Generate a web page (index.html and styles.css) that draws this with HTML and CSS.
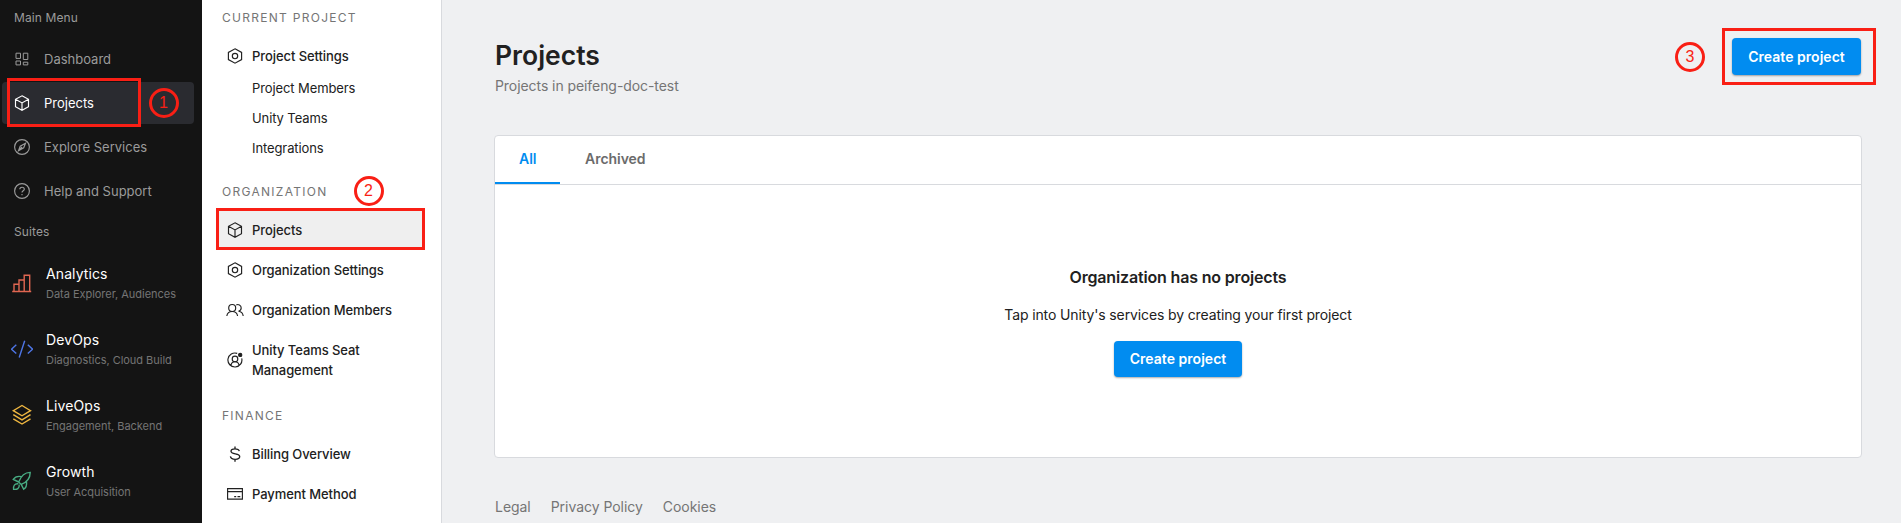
FILE: index.html
```html
<!DOCTYPE html>
<html lang="en">
<head>
<meta charset="utf-8">
<title>Projects</title>
<link rel="stylesheet" href="styles.css">
</head>
<body>
<svg class="defs" aria-hidden="true">
  <symbol id="cube" viewBox="0 0 16 16"><path d="M8 .8 14.5 4.3V11.7L8 15.3 1.5 11.7V4.3ZM1.5 4.3 8 7.9 14.5 4.3M8 7.9V15.3"/></symbol>
  <symbol id="hex" viewBox="0 0 16 16"><path d="M8 .8 14.6 4.4V11.6L8 15.2 1.4 11.6V4.4Z"/><circle cx="8" cy="8" r="2.7"/></symbol>
</svg>
<div class="app">
  <aside class="main-menu">
    <div class="menu-label">Main Menu</div>
    <nav class="menu-list">
      <a class="menu-item"><svg class="icon grid-icon" viewBox="0 0 16 16"><path d="M2 2.2h4.5v5.2H2zM9.3 2.2h4.5v6.3H9.3zM2 10h4.5v3.9H2zM9.3 11.2h4.5v2.7H9.3z"/></svg>Dashboard</a>
      <a class="menu-item active"><svg class="icon"><use href="#cube"/></svg>Projects</a>
      <a class="menu-item"><svg class="icon" viewBox="0 0 16 16"><circle cx="8" cy="8" r="7.4"/><path d="M11.5 4.2 9.7 8.8 4.5 11.8 6.2 7.2ZM4.5 11.8 8 8"/></svg>Explore Services</a>
      <a class="menu-item"><svg class="icon" viewBox="0 0 16 16"><circle cx="8" cy="8" r="7.4"/><path d="M5.8 6.3C5.8 3.5 10.3 3.6 10.3 6.2 10.3 7.8 8 7.8 8 9.6M8 10.9V12.2"/></svg>Help and Support</a>
    </nav>
    <div class="menu-label suites-label">Suites</div>
    <a class="suite"><svg class="suite-icon coral" viewBox="0 0 22 22"><path d="M1.2 19.5H20.2M3 19.5V12.3H8V19.5M8 19.5V8H13.2V19.5M13.2 19.5V3.3H18.7V19.5"/></svg><span><b>Analytics</b><small>Data Explorer, Audiences</small></span></a>
    <a class="suite"><svg class="suite-icon blue" viewBox="0 0 22 22"><path d="M5.3 6.8.5 11.2 5.3 15.6M16.8 6.8 21.6 11.2 16.8 15.6M13.7 2.8 8.2 19.5"/></svg><span><b>DevOps</b><small>Diagnostics, Cloud Build</small></span></a>
    <a class="suite"><svg class="suite-icon gold" viewBox="0 0 22 22"><path d="M11 1.5 19.5 6.7 11 11.8 2.3 6.7ZM2.3 10.7 11 15.9 19.5 10.7M2.3 14.8 11 20 19.5 14.8"/></svg><span><b>LiveOps</b><small>Engagement, Backend</small></span></a>
    <a class="suite"><svg class="suite-icon green" viewBox="0 0 22 22"><path d="M19.2 2.4C14 2.4 10 6 7.7 12L10.2 14.4C16.2 12 19.2 7.7 19.2 2.4ZM10.5 6.6C6.3 5.8 3.8 7 2.3 9.4L7.7 12M15.5 11.6C16 15.5 14.6 18.1 12.7 19.2L10.2 14.4M7.3 13.8C3.5 13.3 2.2 16 2.6 19.3 6 19.8 8.7 18.4 8.2 14.7"/></svg><span><b>Growth</b><small>User Acquisition</small></span></a>
  </aside>
  <aside class="sub-menu">
    <h2 class="group">CURRENT PROJECT</h2>
    <a class="nav-item"><svg class="icon"><use href="#hex"/></svg><span>Project Settings</span></a>
    <div class="children"><a>Project Members</a><a>Unity Teams</a><a>Integrations</a></div>
    <h2 class="group organization">ORGANIZATION</h2>
    <a class="nav-item selected"><svg class="icon"><use href="#cube"/></svg><span>Projects</span></a>
    <a class="nav-item"><svg class="icon"><use href="#hex"/></svg><span>Organization Settings</span></a>
    <a class="nav-item"><svg class="icon people" viewBox="0 0 18 16"><circle cx="6.2" cy="6" r="3.5"/><path d="M.8 14C1.2 11.5 3 9.5 6.2 9.5S11.2 11.5 11.6 14M10.3 3C12 1.8 15.3 3 15.2 6 15.1 8 13.7 9 12.5 9.2 15.3 9.5 16.9 11.4 17.2 14"/></svg><span>Organization Members</span></a>
    <a class="nav-item tall"><svg class="icon" viewBox="0 0 16 16"><path d="M10.2 1.4A7 7 0 1 0 14.7 6.3M4 13.1C4.3 10.8 5.5 9.7 8 9.7S11.7 10.8 12 13.1"/><circle cx="8" cy="6.9" r="2.8"/><circle class="solid" cx="13.2" cy="2.9" r="1.6"/></svg><span>Unity Teams Seat Management</span></a>
    <h2 class="group finance">FINANCE</h2>
    <a class="nav-item"><svg class="icon dollar" viewBox="0 0 16 16"><path d="M12.3 5.2C12 3.6 10.4 2.8 8 2.8 5.7 2.8 4 3.7 4 5.3 4 9 12.7 6.9 12.7 10.6 12.7 12.4 10.9 13.3 8.2 13.3 5.4 13.3 3.7 12.3 3.4 10.4M8 .5V2.8M8 13.3V15.7"/></svg><span>Billing Overview</span></a>
    <a class="nav-item"><svg class="icon" viewBox="0 0 16 16"><path d="M.6 2.6H15.4V13.1H.6ZM.6 5.6H15.4M7.2 10.6H9.2M10.5 10.6H13.3"/></svg><span>Payment Method</span></a>
  </aside>
  <main class="content">
    <header class="page-head">
      <div><h1>Projects</h1><p>Projects in peifeng-doc-test</p></div>
      <button class="primary">Create project</button>
    </header>
    <section class="card">
      <div class="tabs"><a class="tab current">All</a><a class="tab">Archived</a></div>
      <div class="empty">
        <h3>Organization has no projects</h3>
        <p>Tap into Unity's services by creating your first project</p>
        <button class="primary">Create project</button>
      </div>
    </section>
    <footer class="footer"><a class="legal">Legal</a><a class="privacy">Privacy Policy</a><a>Cookies</a></footer>
  </main>
</div>
<div class="mark box-one"></div><div class="mark step step-one">1</div>
<div class="mark box-two"></div><div class="mark step step-two">2</div>
<div class="mark box-three"></div><div class="mark step step-three">3</div>
</body>
</html>
```
FILE: styles.css
```css
* { box-sizing: border-box; }
body { margin: 0; font-family: Inter, "Liberation Sans", sans-serif; color: #212121; overflow: hidden; }
h1, h2, h3, p { margin: 0; }
.defs { position: absolute; width: 0; height: 0; }
.app { display: flex; height: 523px; overflow: hidden; }
svg { fill: none; stroke: currentColor; stroke-width: 1.15; flex: none; }
.icon { width: 16px; height: 16px; }
.solid { fill: currentColor; }

.main-menu { width: 202px; flex: none; background: #141414; color: #9b9b9b; }
.menu-label { height: 36px; line-height: 36px; padding-left: 14px; font-size: 12px; letter-spacing: .1px; }
.menu-list { display: grid; gap: 2px; padding: 2px 8px 0 2px; }
.menu-item { display: flex; align-items: center; gap: 14px; height: 42px; padding-left: 12px; border-radius: 4px; font-size: 13px; letter-spacing: 0; }
.menu-item.active { background: #2a2b30; color: #fff; }
.grid-icon { stroke-width: 1; }
.suites-label { height: 39px; line-height: 39px; }
.suite { display: flex; align-items: center; gap: 13px; height: 66px; padding-left: 11px; }
.suite b, .suite small { display: block; white-space: nowrap; }
.suite b { font-size: 14px; line-height: 20px; font-weight: 400; color: #fff; letter-spacing: .1px; }
.suite small { font-size: 11px; line-height: 20px; color: #757575; letter-spacing: -.03px; }
.suite-icon { width: 22px; height: 22px; margin-top: -2px; stroke-width: 1.4; }
.coral { color: #e06651; }
.blue { color: #4e75e5; }
.gold { color: #efb741; }
.green { color: #48ac83; }

.sub-menu { width: 240px; flex: none; background: #fff; border-right: 1px solid #d8dade; padding: 0 16px; }
.group { height: 36px; padding-left: 4px; font-size: 12px; line-height: 36px; font-weight: 400; letter-spacing: 1.28px; color: #757575; }
.nav-item { display: flex; align-items: center; gap: 9px; height: 40px; padding-left: 9px; font-size: 13px; line-height: 20px; font-weight: 500; letter-spacing: -.08px; }
.nav-item span { width: 150px; }
.nav-item.tall { height: 60px; }
.people { width: 18px; margin: 0 -1px; }
.dollar { stroke-width: 1.35; }
.nav-item.selected { background: #efefef; }
.children { display: grid; grid-template-rows: repeat(3, 30px); padding: 0 0 0 34px; margin-top: -3px; font-size: 13px; line-height: 30px; letter-spacing: -.1px; }
.organization { height: 37px; margin-top: 10px; line-height: 37px; }
.finance { height: 44px; line-height: 52px; }

.content { flex: 1; padding: 36px 39px 0 52px; background: #eff0f2; }
.page-head { display: flex; justify-content: space-between; align-items: flex-start; height: 99px; }
h1 { font-size: 26.5px; line-height: 38px; font-weight: 600; padding-left: 1px; }
.page-head p { padding-left: 1px; font-size: 14px; line-height: 24px; color: #757575; letter-spacing: -.07px; }
.primary { height: 37px; width: 129px; padding: 0 0 1px; border: 0; border-radius: 4px; background: #018cf0; color: #fff; font: 600 14px Inter, sans-serif; letter-spacing: .03px; box-shadow: 0 1px 2px #0005; }
.page-head .primary { margin: 2px 1px 0 0; }
.card { height: 323px; border: 1px solid #d8dade; border-radius: 4px; background: #fff; }
.tabs { display: flex; height: 49px; border-bottom: 1px solid #d8dade; }
.tab { height: 48px; padding: 0 25px; font-size: 14px; line-height: 46px; font-weight: 600; color: #6b6b6b; letter-spacing: -.03px; }
.tab.current { width: 65px; padding: 0 24px; color: #018cf0; border-bottom: 2px solid #018cf0; }
.empty { display: flex; flex-direction: column; align-items: center; padding-top: 80px; }
.empty h3 { font-size: 16px; line-height: 24px; font-weight: 600; letter-spacing: -.16px; }
.empty p { font-size: 14px; line-height: 24px; margin: 14px 0; letter-spacing: -.125px; }
.empty .primary { width: 128px; height: 36px; }
.footer { display: flex; gap: 20px; padding: 39px 1px 0; font-size: 14px; line-height: 20px; color: #757575; letter-spacing: -.04px; }

.mark { position: absolute; border: 3px solid #f91f15; color: #f91f15; }
.box-one { left: 6.5px; top: 78px; width: 134px; height: 49px; }
.box-two { left: 216px; top: 208px; width: 209px; height: 42px; }
.box-three { left: 1722px; top: 28px; width: 154px; height: 57px; }
.step { width: 30px; height: 30px; border-radius: 50%; font: 16px/24px "Liberation Sans", sans-serif; text-align: center; }
.step-one { left: 148.5px; top: 87.5px; }
.step-two { left: 353.5px; top: 175.5px; }
.step-three { left: 1675px; top: 42px; }
```
